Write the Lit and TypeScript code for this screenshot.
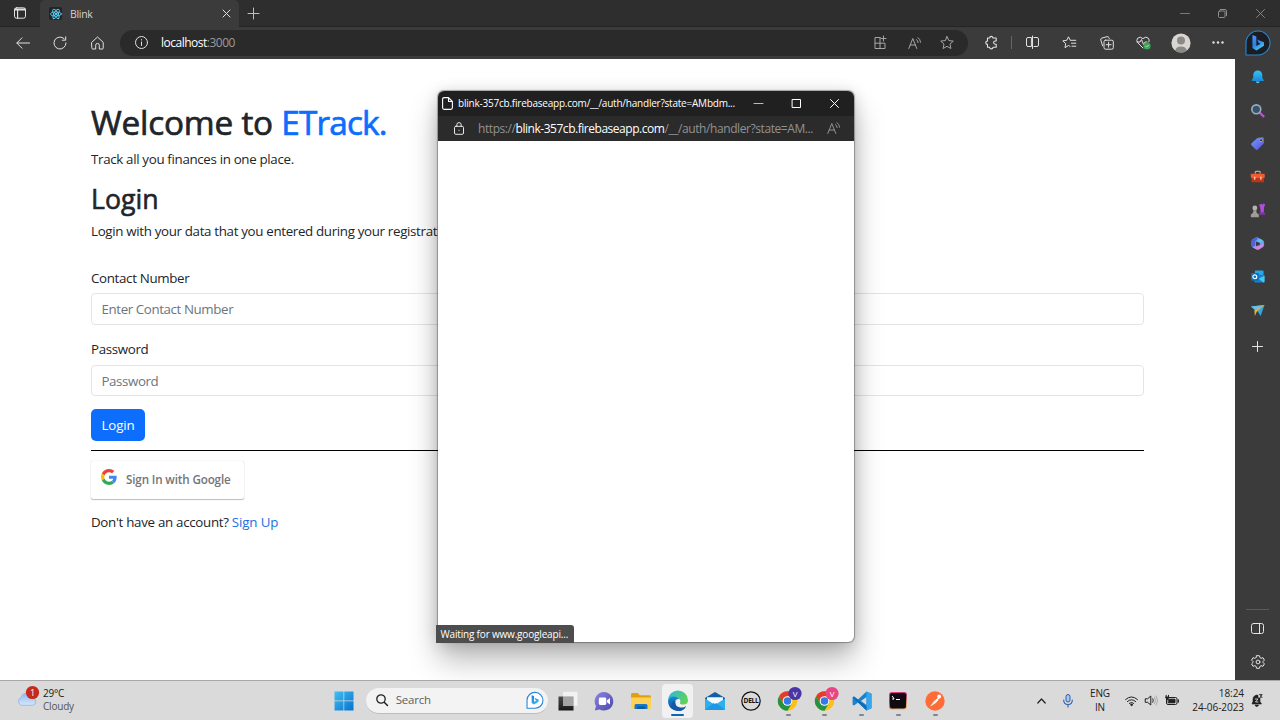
import { LitElement, html, svg, css } from "lit";
import type { SVGTemplateResult } from "lit";
import { customElement } from "lit/decorators.js";

const icon = (w: number, h: number, box: string, body: SVGTemplateResult, cls = "line") =>
  html`<svg class=${cls} width=${w} height=${h} viewBox=${box}>${body}</svg>`;

const shared = css`
  * { box-sizing: border-box; }
  svg { display: block; flex: none; overflow: visible; }
  .line { fill: none; stroke: currentColor; stroke-width: 1; stroke-linecap: round; stroke-linejoin: round; }
  .solid { fill: currentColor; stroke: none; }
  .cell { display: flex; align-items: center; justify-content: center; flex: none; }
`;

const bingMark = svg`<path d="M1 0 L4.4 1.2 V9.6 L8 7.6 L6.2 6.7 L5.2 4 L11 6.2 V9.4 L4.4 13.4 L1 11.3Z" fill="url(#bg)"/>`;
const readAloud = svg`<path d="M.8 11.5 L4.8 1.5 L8.8 11.5 M2.2 8h5.2 M8.6 2.6q1.3 1.1 1.5 3 M10 .6q2.3 1.6 2.6 4.7"/>`;

@customElement("browser-chrome")
class BrowserChrome extends LitElement {
  static styles = [shared, css`
    :host { display: block; color: #e2e2e2; }
    .tabs { height: 27px; background: #2e2e2e; display: flex; border-bottom: 1px solid #242424; }
    .workspace { width: 40px; }
    .tab { width: 199px; height: 27px; background: #3b3b3b; border-radius: 5px 5px 0 0; display: flex; align-items: center; padding: 0 8px 0 9px; flex: none; }
    .favicon { width: 13px; height: 13px; background: #20242c; border-radius: 2px; color: #61dafb; }
    .title { flex: 1; margin-left: 8px; font-size: 10.5px; letter-spacing: -0.3px; color: #d2d2d2; }
    .new { width: 29px; color: #bdbdbd; }
    .gap { flex: 1; }
    .win { width: 38px; color: #8d8d8d; }
    .buttons { display: flex; margin-right: 0.500px; }
    .bar { height: 32px; background: #3b3b3b; display: flex; align-items: center; padding: 0 0 1px 4.500px; }
    .tool { width: 37px; height: 31px; }
    .address { width: 848px; height: 26px; margin: 0 5px 0 4.500px; border-radius: 13px; background: #2a2a2a; display: flex; align-items: center; padding: 0 4px 0 15px; flex: none; }
    .url { flex: 1; margin-left: 13px; font-size: 12px; letter-spacing: -0.5px; color: #fff; }
    .port { color: #9a9a9a; }
    .small { width: 33.3px; color: #a5a5a5; }
    .rule { width: 1px; height: 13px; background: #666; margin: 0 2px 0 1px; flex: none; }
    .bing { width: 45px; height: 31px; margin-left: -1px; }
  `];
  render() {
    return html`
      <div class="tabs">
        <div class="cell workspace">${icon(12, 12, "0 0 12 12", svg`<rect x=".5" y=".8" width="11" height="10.4" rx="2"/><path d="M.8 2.2h10.4M.8 3h10.4M3.6 3.2v8" stroke-width="1.2"/>`)}</div>
        <div class="tab">
          <div class="cell favicon">${icon(12, 12, "0 0 12 12", svg`<g stroke-width=".8"><ellipse cx="6" cy="6" rx="5.4" ry="2.1"/><ellipse cx="6" cy="6" rx="5.4" ry="2.1" transform="rotate(60 6 6)"/><ellipse cx="6" cy="6" rx="5.4" ry="2.1" transform="rotate(120 6 6)"/></g><circle cx="6" cy="6" r=".7" fill="currentColor"/>`)}</div>
          <span class="title">Blink</span>
          ${icon(9, 9, "0 0 9 9", svg`<path d="M1 1l7 7M8 1l-7 7"/>`)}
        </div>
        <div class="cell new">${icon(11, 11, "0 0 11 11", svg`<path d="M5.5 0v11M0 5.5h11"/>`)}</div>
        <div class="gap"></div>
        <div class="buttons">
          <div class="cell win">${icon(10, 9, "0 0 10 9", svg`<path d="M.5 4.5h9" stroke-width=".8"/>`)}</div>
          <div class="cell win">${icon(9, 9, "0 0 9 9", svg`<rect x=".5" y="2" width="6.5" height="6.5" rx="1"/><path d="M2.3 .5h4.7q1.5 0 1.5 1.5v4.7"/>`)}</div>
          <div class="cell win">${icon(9, 9, "0 0 9 9", svg`<path d="M.5 .5l8 8M8.500 .5l-8 8" stroke-width=".9"/>`)}</div>
        </div>
      </div>
      <div class="bar">
        <div class="cell tool">${icon(14, 12, "0 0 14 12", svg`<path d="M13.5 6H1M6 .8L.8 6 6 11.2"/>`)}</div>
        <div class="cell tool">${icon(14, 14, "0 0 14 14", svg`<path d="M13 7A6 6 0 1 1 11.2 2.700M12.700 .8v3.400h-3.400"/>`)}</div>
        <div class="cell tool">${icon(13, 14, "0 0 13 14", svg`<path d="M.8 6.300L6.500 1l5.700 5.300v5.900q0 .8-.8.8H8.300V9.200a1.800 1.800 0 0 0-3.600 0V13H1.600q-.8 0-.8-.8z"/>`)}</div>
        <div class="address">
          ${icon(13, 13, "0 0 13 13", svg`<circle cx="6.500" cy="6.500" r="6"/><path d="M6.500 6v3.500M6.500 3.600v.4"/>`)}
          <span class="url">localhost<span class="port">:3000</span></span>
          <div class="cell small">${icon(13, 13, "0 0 13 13", svg`<path d="M6 1.500H1v11h10V7.200H1M6 1.500v11M9.500 0v5M7 2.500h5"/>`)}</div>
          <div class="cell small">${icon(13, 12, "0 0 13 12", readAloud)}</div>
          <div class="cell small">${icon(14, 13, "0 0 14 13", svg`<path d="M7 .6l1.900 4 4.400.5-3.300 3 .9 4.400L7 10.300l-3.900 2.200.9-4.400-3.300-3 4.400-.5z"/>`)}</div>
        </div>
        <div class="cell tool">${icon(13, 13, "0 0 13 13", svg`<path d="M2.500 2h2.200a1.600 1.600 0 0 1 3.200 0h3.300v3h-1a1.600 1.600 0 0 0 0 3.200h1v3H8a1.700 1.700 0 0 1-3.400 0H2.500V8.400a1.700 1.700 0 0 1 0-3.400z" stroke-width="1.100"/>`)}</div>
        <div class="rule"></div>
        <div class="cell tool">${icon(13, 13, "0 0 13 13", svg`<path d="M5 1.500H2q-1.500 0-1.500 1.500v6q0 1.500 1.500 1.500h3zM8 1.500h3q1.500 0 1.500 1.500v6q0 1.500-1.500 1.500H8M6.500 0v12.500"/>`)}</div>
        <div class="cell tool">${icon(15, 13, "0 0 15 13", svg`<path d="M8 10.300l-1.500-.8L3 11.600l.7-4L.8 4.900l3.900-.6L6.500.8l1.700 3.500h5.600M9.500 7.200h4.300M10 10.200h3.800"/>`)}</div>
        <div class="cell tool">${icon(14, 14, "0 0 14 14", svg`<rect x="4" y="4.200" width="9.300" height="9" rx="1.500"/><path d="M8.600 6.200v5M6.100 8.700h5M2.600 9.800L.8 4q-.4-1.400 1-1.900L7 .7q1.300-.3 1.900.8l.3 1"/>`)}</div>
        <div class="cell tool">${icon(15, 14, "0 0 15 14", svg`<path d="M7 12L1.800 6.800Q-.2 4.200 1.700 2.200 4-.1 7 2.600 10-.1 12.300 2.200q1.500 1.700.6 3.800M1 6h3l1.500-2.500 2 5L9 6h2" /><circle cx="11" cy="10" r="3.600" fill="#34a853" stroke="none"/><path d="M9.500 10l1.100 1.100 2-2" stroke-width=".8"/>`)}</div>
        <div class="cell tool">${icon(20, 20, "0 0 20 20", svg`<circle cx="10" cy="10" r="9.600" fill="#d9d6d2"/><circle cx="10" cy="7.500" r="4" fill="#8b8985"/><path d="M4.200 17.600q.8-4.200 5.800-4.200t5.800 4.200a9.600 9.600 0 0 1-11.600 0z" fill="#8b8985"/>`, "solid")}</div>
        <div class="cell tool">${icon(12, 3, "0 0 12 3", svg`<circle cx="1.500" cy="1.500" r="1.200"/><circle cx="6" cy="1.500" r="1.200"/><circle cx="10.500" cy="1.500" r="1.200"/>`, "solid")}</div>
        <div class="cell bing">${icon(26, 26, "0 0 26 26", svg`<defs><linearGradient id="bg" x1="0" y1="0" x2=".6" y2="1"><stop stop-color="#4a9dff"/><stop offset=".55" stop-color="#2c7de8"/><stop offset="1" stop-color="#4cc9ef"/></linearGradient></defs><path d="M1 25V13A12 12 0 1 1 13 25z" fill="#1b1d20" stroke="#2487d3" stroke-width="1.100"/><g transform="translate(6.300 5) scale(1.150)">${bingMark}</g>`, "solid")}</div>
      </div>`;
  }
}

@customElement("side-rail")
class SideRail extends LitElement {
  static styles = [shared, css`
    :host { width: 45px; flex: none; background: #3b3b3b; display: flex; flex-direction: column; padding: 1.500px 0 1.500px; color: #e4e4e4; }
    .app { height: 33.35px; }
    .add { height: 38px; }
    .gap { flex: 1; }
    .rule { width: 23px; height: 1px; background: #5b5b5b; margin: 0 auto 2px; }
  `];
  render() {
    const apps = [
      svg`<defs><linearGradient id="b" x2="0" y2="1"><stop stop-color="#35c4f3"/><stop offset="1" stop-color="#168bd8"/></linearGradient></defs><path d="M8 1.500a4.700 4.700 0 0 1 4.700 4.700v2.900l1.500 2.400q.2.900-.8.900H2.600q-1 0-.8-.9l1.500-2.400V6.200A4.700 4.700 0 0 1 8 1.500z" fill="url(#b)"/><path d="M6 13h4q-.4 1.700-2 1.700T6 13z" fill="#69c7f4"/>`,
      svg`<path d="M10 10l4 3.700" stroke="#b653cf" stroke-width="2.400" stroke-linecap="round"/><circle cx="6.500" cy="6.500" r="4.600" fill="#36536b" stroke="#9badba" stroke-width="1.700"/>`,
      svg`<defs><linearGradient id="t" x2="1" y2="1"><stop stop-color="#6f9cff"/><stop offset="1" stop-color="#5b4fdc"/></linearGradient></defs><path d="M8.500 1.700l4.600-.5q1 0 1.100 1l.2 4.500q0 .7-.5 1.200l-6 6q-1 .9-2 0L1.600 9.500q-.9-1 0-2L7.300 2.200q.5-.4 1.200-.5z" fill="url(#t)"/><circle cx="11.400" cy="4.400" r="1.500" fill="#1b284f" stroke="#e0be4b" stroke-width=".8"/>`,
      svg`<path d="M5.500 5V3.200q0-.7.7-.7h3.600q.7 0 .7.700V5" fill="none" stroke="#c9a08e" stroke-width="1.200"/><rect x=".8" y="4.800" width="14.400" height="4.500" rx="1" fill="#f05b32"/><path d="M1.500 9.300h13v3.500q0 1-1 1h-11q-1 0-1-1z" fill="#bd3518"/><rect x="4" y="8" width="1.600" height="3" fill="#f5c7a1"/><rect x="10.400" y="8" width="1.600" height="3" fill="#f5c7a1"/>`,
      svg`<path d="M9.200 1l1.300 .8L11.500.600l1.200 1.100L14 .600l1.600.700-1.200 3.700-.2 5H11l-.4-5z" fill="#b44be3"/><path d="M9.500 10h6l.5 2.200H9.500z" fill="#832fb8"/><circle cx="5" cy="5.200" r="2.500" fill="#b5b3ae"/><path d="M3 7.400h4l-.6 1.500q.5 2 2.700 3v2.900H.9v-2.900q2.200-1 2.700-3z" fill="#9f9d98"/>`,
      svg`<defs><linearGradient id="m" x2="1" y2="1"><stop stop-color="#586cf0"/><stop offset=".5" stop-color="#60c6ee"/><stop offset="1" stop-color="#695bdf"/></linearGradient></defs><path d="M7 1l6 3.200q1.600 1 1.600 2.800v2q0 1.800-1.600 2.800l-3.300 2q-1.700 1-3.400 0L3 11.800Q1.500 11 1.500 9V5.500Q1.500 4 3 3z" fill="url(#m)"/><path d="M7 1q2 2-1.500 4.200v5.500l-3 .7q-1-.8-1-2.400V5.500Q1.500 4 3 3z" fill="#5261d3"/><path d="M2.500 11.400l7.400-1.500 4-3 .2 3.500-4.400 3.400q-1.700 1-3.400 0z" fill="#d384da"/><path d="M6.200 5.700l4 1.200v2.500L6.200 10.500z" fill="#3b3b4b"/>`,
      svg`<rect x="5" y="1.500" width="9" height="9" rx="1" fill="#27a8ea"/><path d="M4.500 6h10.300v7q0 1-1 1H5.500q-1 0-1-1z" fill="#1683d2"/><path d="M9 10l6-3v6q0 1-1 1z" fill="#48c7ee"/><rect x="1" y="4" width="8" height="8" rx="1" fill="#0870bd"/><circle cx="5" cy="8" r="2" fill="none" stroke="#fff" stroke-width="1.200"/>`,
      svg`<path d="M1 3.500L15 2l-4 11.500L7.500 8z" fill="#31a6e2"/><path d="M1 3.500L15 2 5.300 7.500z" fill="#62c2ef"/><path d="M15 2L7 9l-2 4.500-.500-6z" fill="#e6af39"/>`,
    ];
    return html`
      ${apps.map((a) => html`<div class="cell app">${icon(15.5, 15.5, "0 0 16 16", a, "solid")}</div>`)}
      <div class="cell add">${icon(11, 11, "0 0 11 11", svg`<path d="M5.500 .5v10M.5 5.500h10"/>`)}</div>
      <div class="gap"></div>
      <div class="rule"></div>
      <div class="cell app">${icon(13, 11, "0 0 13 11", svg`<rect x=".5" y=".5" width="12" height="10" rx="2"/><path d="M8.500 .5v10"/>`)}</div>
      <div class="cell app">${icon(14, 14, "0 0 14 14", svg`<path d="M5.600 .7h2.800l.5 1.900 1.200.7 1.900-.6 1.400 2.400L12 6.500v1l1.400 1.400-1.400 2.400-1.900-.6-1.200.7-.5 1.900H5.600l-.5-1.900-1.200-.7-1.900.6L.6 8.900 2 7.500v-1L.6 5.100 2 2.700l1.900.6 1.200-.7z"/><circle cx="7" cy="7" r="1.900"/>`)}</div>`;
  }
}

@customElement("login-page")
class LoginPage extends LitElement {
  static styles = [shared, css`
    :host { flex: 1; background: #fff; padding: 43.400px 91.500px 0 91px; color: #212529; font-size: 13.333px; line-height: 20px; letter-spacing: -0.330px; }
    h1, h2, p { margin: 0; }
    h1 { font-size: 33.330px; line-height: 40px; font-weight: 400; margin-bottom: 6.600px; letter-spacing: -0.220px; -webkit-text-stroke: 0.700px currentColor; }
    .brand { color: #0d6efd; letter-spacing: -0.850px; }
    h2 { font-size: 26.670px; line-height: 32px; font-weight: 400; margin: 14px 0 6px; letter-spacing: 0; -webkit-text-stroke: 0.600px currentColor; }
    .label { margin-top: 26.700px; margin-bottom: 5.500px; }
    .second { margin-top: 14px; margin-bottom: 6px; }
    .input { height: 31.500px; border: 1px solid #e2e5e8; border-radius: 4px; color: #6c757d; padding: 5px 9.500px; letter-spacing: -0.400px; }
    .login { height: 31.500px; width: 54px; margin-top: 13px; background: #0d6efd; color: #fff; border-radius: 5px; letter-spacing: -0.150px; }
    .rule { height: 1px; background: #000; margin: 9px 0 10px; }
    .google { width: 152.500px; height: 38px; background: #fff; border-radius: 2px; box-shadow: 0 0 1px rgba(0,0,0,.25), 0 1px 1px rgba(0,0,0,.25); display: flex; align-items: center; padding-left: 9.500px; color: #757575; font-size: 11.670px; font-weight: 600; letter-spacing: -0.150px; }
    .g { margin: -5px 9.500px 0 0; }
    .signup { margin-top: 13.500px; letter-spacing: -0.300px; }
    .link { color: #1a6fe0; letter-spacing: -0.150px; }
  `];
  render() {
    return html`
      <h1>Welcome to <span class="brand">ETrack.</span></h1>
      <p class="body">Track all you finances in one place.</p>
      <h2>Login</h2>
      <p class="body">Login with your data that you entered during your registration.</p>
      <div class="label">Contact Number</div>
      <div class="input">Enter Contact Number</div>
      <div class="label second">Password</div>
      <div class="input">Password</div>
      <div class="cell login">Login</div>
      <div class="rule"></div>
      <div class="google">
        ${icon(16, 16, "0 0 48 48", svg`<path fill="#EA4335" d="M24 9.500c3.540 0 6.710 1.220 9.210 3.600l6.850-6.850C35.900 2.380 30.470 0 24 0 14.620 0 6.510 5.380 2.560 13.220l7.980 6.190C12.430 13.720 17.740 9.500 24 9.500z"/><path fill="#4285F4" d="M46.980 24.550c0-1.570-.15-3.090-.38-4.550H24v9.020h12.940c-.58 2.960-2.260 5.480-4.780 7.180l7.730 6c4.510-4.180 7.090-10.360 7.090-17.650z"/><path fill="#FBBC05" d="M10.530 28.590c-.48-1.450-.76-2.990-.76-4.590s.27-3.140.76-4.590l-7.980-6.190C.92 16.460 0 20.120 0 24c0 3.880.92 7.540 2.560 10.780l7.970-6.190z"/><path fill="#34A853" d="M24 48c6.480 0 11.930-2.130 15.890-5.810l-7.730-6c-2.150 1.450-4.920 2.300-8.160 2.300-6.260 0-11.570-4.220-13.470-9.910l-7.980 6.190C6.510 42.620 14.620 48 24 48z"/>`, "solid g")}
        <span>Sign In with Google</span>
      </div>
      <p class="signup">Don't have an account? <span class="link">Sign Up</span></p>`;
  }
}

@customElement("auth-popup")
class AuthPopup extends LitElement {
  static styles = [shared, css`
    :host { position: absolute; left: 437.500px; top: 91px; width: 416.500px; height: 551px; display: flex; flex-direction: column; background: #fff; border-radius: 6px; box-shadow: 0 0 1px 0.500px rgba(0,0,0,.3), 0 18px 30px rgba(0,0,0,.28), 0 2px 16px rgba(0,0,0,.16); }
    .head { height: 25px; background: #202020; border-radius: 6px 6px 0 0; color: #fff; display: flex; align-items: center; padding: 0 0 1px 4.500px; font-size: 10px; }
    .title { width: 284px; margin-left: 5px; letter-spacing: -0.220px; white-space: nowrap; }
    .btn { width: 38.300px; }
    .addr { height: 25px; background: #2b2b2b; color: #929292; display: flex; align-items: center; padding: 0 0 1px 16.500px; font-size: 12px; }
    .url { width: 349px; margin-left: 14px; letter-spacing: -0.420px; white-space: nowrap; }
    .host { color: #fff; letter-spacing: -0.470px; }
    .gap { flex: 1; }
    .status { width: 137.500px; height: 18px; margin: 0 0 -1px -1.500px; background: #4d4d4d; color: #fff; border-radius: 0 3px 0 0; display: flex; align-items: center; padding-left: 4.500px; font-size: 10px; letter-spacing: -0.180px; white-space: nowrap; }
  `];
  render() {
    return html`
      <div class="head">
        ${icon(11, 13, "0 0 11 13", svg`<path d="M2.200 .6h4.300l3.900 3.900v6.300q0 1.600-1.600 1.600H2.200Q.6 12.400.6 10.800V2.200Q.6.6 2.200.6zM6.500 .8v3.700h3.700" stroke-width="1.100"/>`)}
        <span class="title">blink-357cb.firebaseapp.com/__/auth/handler?state=AMbdm...</span>
        <div class="cell btn">${icon(9, 9, "0 0 9 9", svg`<path d="M0 4.500h9" stroke-width=".7"/>`)}</div>
        <div class="cell btn">${icon(9, 9, "0 0 9 9", svg`<rect x=".5" y=".5" width="8" height="8"/>`)}</div>
        <div class="cell btn">${icon(9, 9, "0 0 9 9", svg`<path d="M.5 .5l8 8M8.500 .5l-8 8"/>`)}</div>
      </div>
      <div class="addr">
        ${icon(10, 13, "0 0 10 13", svg`<rect x=".5" y="4.300" width="9" height="8" rx="1.300" stroke="#e8e8e8"/><path d="M2.800 4.300V2.800a2.200 2.200 0 0 1 4.400 0v1.500M5 8.200v.2" stroke="#e8e8e8"/>`)}
        <span class="url">https://<span class="host">blink-357cb.firebaseapp.com</span>/__/auth/handler?state=AM...</span>
        ${icon(13, 12, "0 0 13 12", readAloud)}
      </div>
      <div class="gap"></div>
      <div class="status">Waiting for www.googleapi...</div>`;
  }
}

const chrome = (letter: string, color: string) => svg`
  <circle cx="9.500" cy="10" r="9.700" fill="#fbc116"/>
  <path d="M1.100 5.150A9.700 9.700 0 0 1 17.900 5.150H9.500L5.300 12.400z" fill="#e33b2e"/>
  <path d="M1.100 5.150L5.300 12.400Q7.500 15.100 13.700 12.400L9.500 19.700A9.700 9.700 0 0 1 1.100 5.150z" fill="#229342"/>
  <circle cx="9.500" cy="10" r="4.800" fill="#fff"/><circle cx="9.500" cy="10" r="3.800" fill="#3579e8"/>
  <circle cx="17" cy="2.500" r="6.600" fill=${color}/>
  <text class="initial" x="17" y="5.500" text-anchor="middle">${letter}</text>`;

@customElement("task-bar")
class TaskBar extends LitElement {
  static styles = [shared, css`
    :host { height: 40px; flex: none; background: #dadada; border-top: 1px solid #a9a9a9; display: flex; align-items: center; font-size: 10px; line-height: 13.500px; color: #202020; letter-spacing: -0.2px; }
    .weather { width: 326px; display: flex; align-items: center; padding-left: 17px; flex: none; }
    .cloudy { margin-left: 5px; margin-top: -0.500px; }
    .muted { color: #555; }
    .badge { fill: #c42b1c; }
    .count { fill: #fff; font-size: 9px; }
    .app { position: relative; width: 36.750px; height: 34px; }
    .search { width: 182px; height: 26px; margin: 0 1.500px 0 3px; background: #f3f3f3; border-radius: 13px; border-bottom: 1px solid #bdbdbd; display: flex; align-items: center; padding: 0 4px 0 10px; flex: none; }
    .hint { flex: 1; margin-left: 8px; font-size: 11.500px; color: #5e5e5e; letter-spacing: -0.2px; }
    .active { background: #f1f1f1; border-radius: 4px; width: 31px; margin: 0 2.870px; }
    .mark { position: absolute; bottom: 1.500px; left: 50%; width: 5px; margin-left: -2.500px; height: 2px; border-radius: 1px; background: #858585; }
    .active .mark { width: 13px; margin-left: -6.500px; background: #1066ae; }
    .initial { fill: #fff; font-size: 8px; }
    .dell { fill: #111; font-size: 6.500px; font-weight: 700; letter-spacing: -0.3px; }
    .gap { flex: 1; }
    .tray { display: flex; align-items: center; flex: none; }
    .up { width: 26px; }
    .mic { width: 27px; color: #2b5fb0; }
    .lang { width: 38px; text-align: center; }
    .net { width: 22px; margin-left: 1px; }
    .vol { width: 17px; margin-left: 1px; }
    .bat { width: 20px; margin-left: 2px; }
    .clock { width: 62px; text-align: right; letter-spacing: -0.050px; white-space: nowrap; }
    .bell { width: 26px; margin-right: 10px; }
  `];
  render() {
    const app = (body: SVGTemplateResult, running = false, active = false) => html`
      <div class="cell app ${active ? "active" : ""}">${icon(20, 20, "0 0 20 20", body, "solid")}${running || active ? html`<div class="mark"></div>` : ""}</div>`;
    return html`
      <div class="weather">
        ${icon(21, 20, "0 0 21 20", svg`<defs><linearGradient id="c" x2="0" y2="1"><stop stop-color="#8fb7ee"/><stop offset="1" stop-color="#d7e7fc"/></linearGradient></defs><path d="M4.300 14.300a4.200 4.200 0 0 1-.3-7.800A6.300 6.300 0 0 1 16.200 7a3.800 3.800 0 0 1-.200 7.300z" fill="url(#c)" stroke="#8db4ec" stroke-width=".8"/><circle class="badge" cx="15.500" cy="1.500" r="6.600"/><text class="count" x="15.500" y="4.700" text-anchor="middle">1</text>`, "solid")}
        <div class="cloudy"><div>29°C</div><div class="muted">Cloudy</div></div>
      </div>
      ${app(svg`<defs><linearGradient id="w" x2="1" y2="1"><stop stop-color="#45bff3"/><stop offset="1" stop-color="#0272cf"/></linearGradient></defs><path d="M.5 .5h9v9h-9zM10.200 .5h9.300v9h-9.300zM.5 10.200h9v9.300h-9zM10.200 10.200h9.300v9.300h-9.300z" fill="url(#w)"/>`)}
      <div class="search">
        ${icon(12, 12, "0 0 12 12", svg`<circle cx="5" cy="5" r="4.200" stroke-width="1.300"/><path d="M8.200 8.200l3.300 3.300" stroke-width="1.500"/>`)}
        <span class="hint">Search</span>
        ${icon(18, 18, "0 0 26 26", svg`<defs><linearGradient id="bg" x1="0" y1="0" x2=".6" y2="1"><stop stop-color="#2a6ee0"/><stop offset="1" stop-color="#31bdf0"/></linearGradient></defs><path d="M1.500 25V13A11.500 11.500 0 1 1 13 25z" fill="#fff" stroke="#2a86dc" stroke-width="1.600"/><g transform="translate(7.200 6)">${bingMark}</g>`, "solid")}
      </div>
      ${app(svg`<defs><linearGradient id="tv" x2="0" y2="1"><stop stop-color="#4a4a4a"/><stop offset="1" stop-color="#181818"/></linearGradient></defs><rect x=".5" y="5.500" width="15" height="14" fill="url(#tv)"/><rect x="5" y=".8" width="14.500" height="14" fill="#fafafa" opacity=".75"/><rect x="5" y="5.500" width="10.500" height="9.300" fill="#a4a4a4"/>`)}
      ${app(svg`<defs><linearGradient id="ch" x2="1" y2="1"><stop stop-color="#8c86df"/><stop offset="1" stop-color="#4b47ad"/></linearGradient></defs><path d="M10 1a9.300 9.300 0 1 1-4.600 17.400L.8 19.500l1.200-4.400A9.300 9.300 0 0 1 10 1z" fill="url(#ch)"/><rect x="4.800" y="6.500" width="7.500" height="7.500" rx="1.400" fill="#fff"/><path d="M13 9.200l3-2.200v6.500l-3-2.200z" fill="#fff"/>`)}
      ${app(svg`<path d="M0 3.500Q0 2 1.500 2h5.300l2 2.300H18.500q1.500 0 1.500 1.500V9H0z" fill="#e0a00f"/><path d="M0 6.500h20v10q0 1.500-1.500 1.500h-17Q0 18 0 16.500z" fill="#ffd257"/><path d="M3.500 18v-3.500q0-1.500 1.500-1.500h10q1.500 0 1.500 1.500V18z" fill="#1877c9"/><path d="M6 15.300h8V18H6z" fill="#0b5da8"/>`)}
      ${app(svg`<defs><linearGradient id="e1" x2="1" y2=".5"><stop stop-color="#2db5e8"/><stop offset="1" stop-color="#5fd25a"/></linearGradient><linearGradient id="e2" x2="0" y2="1"><stop stop-color="#168bd5"/><stop offset="1" stop-color="#114a9b"/></linearGradient></defs><path d="M0 10A10 10 0 0 1 20 9q0 4.500-4.500 4.500-4 0-3.500-2 1-1-.2-3Q10 6 6.500 6 1.500 6 0 10z" fill="url(#e1)"/><path d="M0 10q1-4.500 6-4.500 3.500 0 5.300 2.500Q7.300 7.500 7 11.500q0 5.500 6 6 2.500 0 4.500-1A10 10 0 0 1 0 10z" fill="url(#e2)"/><path d="M7.300 10q-.8 5.500 5 6.500 3.500.5 6-1.500-2.300 5-8.300 5Q4 18.500 4 13q.3-3 3.300-3z" fill="#135ba9"/>`, true, true)}
      ${app(svg`<path d="M0 7L10 1l10 6v12H0z" fill="#0f5ea6"/><path d="M2 6.500h16V14H2z" fill="#e7f5ff"/><path d="M0 7.500l10 6.500 10-6.500V19H0z" fill="#2cb0ee"/><path d="M0 19l10-8 10 8z" fill="#1e97e4"/><path d="M2 6.500h16l-8 6.500z" fill="#f4fbff"/>`)}
      ${app(svg`<circle cx="10" cy="10" r="9.200" fill="none" stroke="#111" stroke-width="1.200"/><text class="dell" x="10" y="12.400" text-anchor="middle" textLength="15" lengthAdjust="spacingAndGlyphs">DELL</text>`)}
      ${app(chrome("V", "#4b35a5"), true)}
      ${app(chrome("V", "#e84582"), true)}
      ${app(svg`<path d="M14.500 .5L19.500 2.800v14.400l-5 2.300L6 11.500 2 14.600.6 13.800v-7.600L2 5.400l4 3.100zM14.500 6L9 10l5.500 4z" fill="#1b83cd" fill-rule="evenodd"/><path d="M14.500 .5l5 2.300v14.400l-5 2.300z" fill="#35a5ed"/><path d="M.6 6.200L2 5.400l12.500 9.800v4.300z" fill="#0f6db8"/>`, true)}
      ${app(svg`<defs><linearGradient id="j" x2=".4" y2="1"><stop stop-color="#e8388c"/><stop offset=".5" stop-color="#b33670"/><stop offset="1" stop-color="#e6b56c"/></linearGradient></defs><rect x="1" y="1" width="18" height="17.500" rx="3" fill="url(#j)"/><rect x="2" y="2" width="16" height="15.500" rx="2" fill="#100b10"/><path d="M4 5l2 2.500-1.500.5 1 .500M8 8.500h4" stroke="#fff" stroke-width="1"/>`, true)}
      ${app(svg`<circle cx="10" cy="10" r="9.700" fill="#ff6c37"/><path d="M5 15.500l4.500-6 3-1.500.8 1-2.300 2.800-4.500 3z" fill="#fff"/><path d="M10 9.500l3.500-3.300 1 1L12 10z" fill="#fff"/><circle cx="14.200" cy="5.500" r="1.900" fill="#fff"/>`, true)}
      <div class="gap"></div>
      <div class="tray">
        <div class="cell up">${icon(9, 6, "0 0 9 6", svg`<path d="M.8 5L4.500 1l3.700 4" stroke-width="1.200"/>`)}</div>
        <div class="cell mic">${icon(10, 13, "0 0 10 13", svg`<rect x="3" y=".5" width="4" height="7.500" rx="2" fill="#a9c7ec"/><path d="M.7 6q0 4.500 4.300 4.500T9.300 6M5 10.500V13" stroke-width="1.100"/>`)}</div>
        <div class="lang"><div>ENG</div><div>IN</div></div>
        <div class="cell net">${icon(13, 10, "0 0 13 10", svg`<path d="M.6 3.500Q6.500-1.800 12.400 3.500M2.400 5.500q4.100-3.600 8.200 0M4.300 7.300q2.200-1.900 4.400 0"/><circle cx="6.500" cy="8.800" r=".8" fill="currentColor"/>`)}</div>
        <div class="cell vol">${icon(13, 11, "0 0 13 11", svg`<path d="M.6 3.800h2L5.800 1v9L2.600 7.300h-2zM7.800 3.800q1 1.700 0 3.400"/><path d="M9.500 2.300q2 3.200 0 6.400M11.300 1q2.600 4.500 0 9" opacity=".25"/>`)}</div>
        <div class="cell bat">${icon(14, 11, "0 0 14 11", svg`<rect x="1.500" y="2.500" width="10.500" height="7" rx="1.500"/><rect x="3.500" y="4.200" width="6.500" height="3.600" fill="currentColor"/><path d="M13.300 5v2" stroke-width="1.300"/><path d="M1.200 .3v1.500M3.500 .3v1.500M.8 2h3.200L2.400 4.500z" fill="currentColor"/>`)}</div>
        <div class="clock"><div>18:24</div><div>24-06-2023</div></div>
        <div class="cell bell">${icon(12, 13, "0 0 12 13", svg`<path d="M1 10l1-2.500V5a4 4 0 0 1 5-3.800V4H9v3.500l1.500 2.500zM4 11h3.500q-.4 1.500-1.700 1.500T4 11zM8 .5h3.300L9 3.300h2.500" stroke="currentColor" stroke-width=".6"/><path d="M4 5h3L4.500 8h3" stroke="#dadada" stroke-width=".9" fill="none"/>`, "solid")}</div>
      </div>`;
  }
}

@customElement("app-root")
class AppRoot extends LitElement {
  static styles = [shared, css`
    :host { position: relative; display: flex; flex-direction: column; width: 1280px; height: 720px; overflow: hidden; background: #fff; font-family: "Open Sans", "Noto Sans", sans-serif; }
    .main { height: 621px; display: flex; overflow: hidden; }
    task-bar { position: relative; }
  `];
  render() {
    return html`
      <browser-chrome></browser-chrome>
      <div class="main">
        <login-page></login-page>
        <side-rail></side-rail>
      </div>
      <auth-popup></auth-popup>
      <task-bar></task-bar>`;
  }
}
